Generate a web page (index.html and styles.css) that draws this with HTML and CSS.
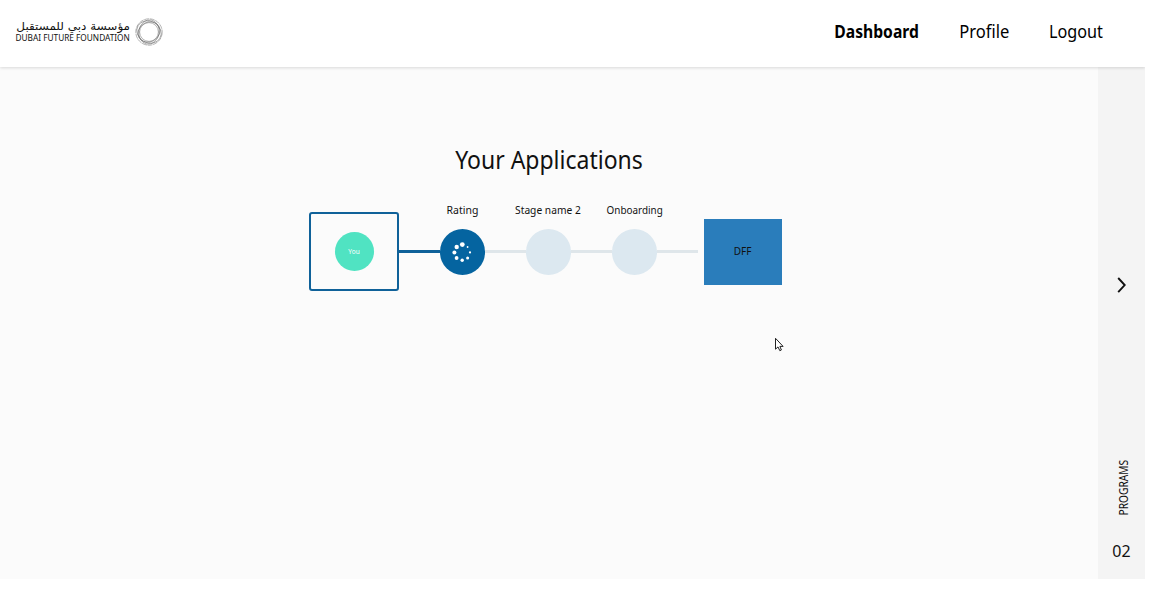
FILE: index.html
```html
<!DOCTYPE html>
<html lang="en">
<head>
<meta charset="utf-8">
<title>Dashboard</title>
<link rel="stylesheet" href="styles.css">
</head>
<body>
<div class="app">
  <header class="header">
    <a class="logo">
      <span class="logo-text">
        <span class="logo-ar" lang="ar" dir="rtl"><span>مؤسسة دبي للمستقبل</span></span>
        <span class="logo-en"><span>DUBAI FUTURE FOUNDATION</span></span>
      </span>
      <svg class="logo-rings" width="28" height="28" viewBox="0 0 28 28" fill="none" stroke="#444" stroke-width=".4">
        <circle cx="14" cy="14" r="13.2" stroke-dasharray="5 .7"/>
        <ellipse cx="14" cy="14" rx="12.6" ry="10.8" transform="rotate(30 14 14)"/>
        <ellipse cx="14" cy="14" rx="12.2" ry="10.2" transform="rotate(100 14 14)"/>
        <ellipse cx="14" cy="14" rx="11.4" ry="9.8" transform="rotate(150 14 14)"/>
        <circle cx="14" cy="14" r="9.4"/>
      </svg>
    </a>
    <nav class="nav">
      <a class="nav-item dashboard active"><span>Dashboard</span></a>
      <a class="nav-item profile"><span>Profile</span></a>
      <a class="nav-item logout"><span>Logout</span></a>
    </nav>
  </header>
  <div class="body">
    <main class="main">
      <h1 class="title"><span>Your Applications</span></h1>
      <div class="pipeline">
        <div class="you-card"><div class="you"><span>You</span></div></div>
        <div class="line done"></div>
        <div class="stage current">
          <div class="label rating"><span>Rating</span></div>
          <div class="dot">
            <svg width="22" height="22" viewBox="0 0 22 22" fill="#fff">
              <circle cx="11.3" cy="3.6" r="2.4"/><circle cx="5.7" cy="6" r="2.2"/>
              <circle cx="3.4" cy="11.4" r="2"/><circle cx="5.6" cy="17" r="1.9"/>
              <circle cx="11.2" cy="19.2" r="1.7"/><circle cx="16.6" cy="16.9" r="1.5"/>
              <circle cx="19" cy="11.4" r="1.1"/><circle cx="16.6" cy="6" r=".9"/>
            </svg>
          </div>
        </div>
        <div class="line"></div>
        <div class="stage">
          <div class="label stage-two"><span>Stage name 2</span></div>
          <div class="dot"></div>
        </div>
        <div class="line"></div>
        <div class="stage">
          <div class="label onboarding"><span>Onboarding</span></div>
          <div class="dot"></div>
        </div>
        <div class="line"></div>
        <div class="program"><span>DFF</span></div>
      </div>
    </main>
    <aside class="side">
      <svg class="chevron" width="12" height="18" viewBox="0 0 12 18" fill="none" stroke="#111" stroke-width="1.9"><path d="M2.2 2 8.7 9.1 2.2 16.2"/></svg>
      <div class="programs"><span>PROGRAMS</span></div>
      <div class="count"><span>02</span></div>
    </aside>
  </div>
</div>
<svg class="cursor" width="11" height="16" viewBox="0 0 11 16"><path d="M1.5 1.3V12.2L4 9.9 5.8 13.7 7.4 13 5.9 9.4H9.1Z" fill="#fff" stroke="#222" stroke-width="1"/></svg>
</body>
</html>
```
FILE: styles.css
```css
* { box-sizing: border-box; }
body {
  margin: 0;
  background: #fff;
  color: #111;
  font-family: "Noto Sans", "Open Sans", sans-serif;
  overflow: hidden;
}
.app { width: 1145px; height: 579px; display: flex; flex-direction: column; }
.header {
  height: 67px;
  flex: none;
  display: flex;
  justify-content: space-between;
  background: #fff;
  box-shadow: 0 1px 3px rgba(0, 0, 0, .14);
  z-index: 1;
  clip-path: inset(0 0 -6px 0);
}
.logo { display: flex; padding: 17px 0 0 16px; gap: 5px; }
.logo-rings { position: relative; top: .5px; }
.logo-text { width: 114px; display: flex; flex-direction: column; padding-top: 3px; }
.logo-ar, .logo-en { display: flex; justify-content: center; white-space: nowrap; }
.logo-ar { height: 11px; font: 11px/14px "DejaVu Sans", sans-serif; }
.logo-ar span { transform: scaleX(1.09); }
.logo-en { font-size: 9.5px; line-height: 13px; }
.logo-en span { transform: scaleX(.87); }
.nav { display: flex; gap: 39.5px; padding: 17px 42.5px 0 0; font-size: 18px; line-height: 28px; color: #000; }
.nav-item { display: flex; justify-content: center; white-space: nowrap; }
.active { font-weight: 700; }
.dashboard { width: 85px; }
.profile { width: 50px; }
.logout { width: 54px; }
.dashboard span { transform: scaleX(.87); }
.profile span { transform: scaleX(.92); }
.logout span { transform: scaleX(.9); }
.body { flex: 1; display: flex; }
.main { width: 1098px; background: #fbfbfb; padding-top: 74px; }
.title { margin: 0; display: flex; justify-content: center; font-size: 25px; font-weight: 400; line-height: 36px; }
.title span { transform: scaleX(.92); }
.pipeline { margin: 35px 0 0 309px; height: 79px; display: flex; align-items: center; }
.you-card {
  width: 90px;
  height: 79px;
  flex: none;
  border: 2px solid #0f6199;
  border-radius: 3px;
  display: flex;
  align-items: center;
  justify-content: center;
}
.you {
  width: 39px;
  height: 39px;
  border-radius: 50%;
  background: #50e3c2;
  color: #fff;
  font-size: 6.5px;
  line-height: 39px;
  text-align: center;
}
.line { width: 40.5px; height: 3px; background: #dfe6ea; flex: none; }
.line.done { background: #0f6199; }
.stage { width: 45.5px; height: 46px; flex: none; display: flex; flex-direction: column; align-items: center; justify-content: flex-end; }
.label { display: flex; flex: none; justify-content: center; white-space: nowrap; font-size: 11.5px; line-height: 16px; margin-bottom: 11px; }
.dot { width: 45.5px; height: 46px; flex: none; border-radius: 50%; background: #dce8f0; display: flex; align-items: center; justify-content: center; }
.current .dot { background: #0564a0; }
.rating span { transform: scaleX(.91); }
.stage-two span { transform: scaleX(.89); }
.onboarding span { transform: scaleX(.86); }
.program { width: 78px; height: 66px; margin-left: 6px; background: #2a7dbb; font-size: 10px; line-height: 65px; text-align: center; }
.side { width: 47px; background: #f4f4f4; display: flex; flex-direction: column; align-items: center; }
.chevron { margin-top: 209px; }
.programs { width: 20px; height: 58px; margin: 165px 0 0 5px; display: flex; align-items: center; justify-content: center; writing-mode: vertical-rl; }
.programs span { font-size: 12px; line-height: 16px; transform: rotate(180deg) scaleY(.85); white-space: nowrap; }
.count { margin-top: 22px; font-size: 16px; line-height: 24px; }
.cursor { position: absolute; left: 774px; top: 337px; }
```
